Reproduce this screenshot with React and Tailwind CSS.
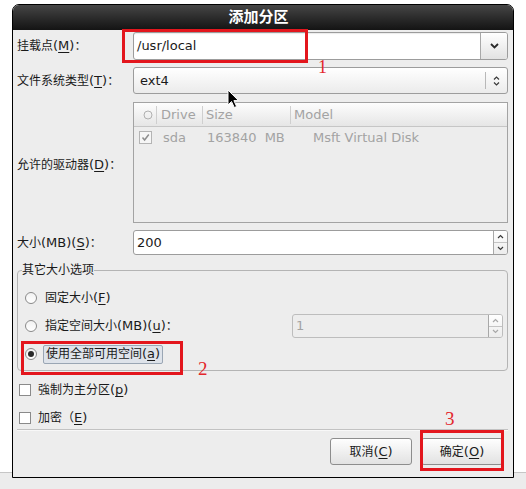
import React from "react";

const CJK_RE = /([\u2E80-\u9FFF\uFF00-\uFFEF\u3000-\u303F]+)/;

function Mixed({ text }) {
  return text.split(CJK_RE).map((p, i) =>
    i % 2 === 1 ? (
      <span key={i} className="text-[12px]">{p}</span>
    ) : (
      <React.Fragment key={i}>{p}</React.Fragment>
    )
  );
}

function Lbl({ a, k, b }) {
  return (
    <span className="whitespace-nowrap">
      <Mixed text={a} />
      <u className="underline-offset-2">{k}</u>
      <Mixed text={b} />
    </span>
  );
}

function ChevDown({ className = "" }) {
  return (
    <svg width="9" height="6" viewBox="0 0 9 6" className={className}>
      <path d="M1 1 L4.5 4.5 L8 1" fill="none" stroke="#2a2a2a" strokeWidth="1.8" />
    </svg>
  );
}

function UpDown() {
  return (
    <svg width="7" height="12" viewBox="0 0 7 12">
      <path d="M1 4.5 L3.5 2 L6 4.5" fill="none" stroke="#3a3a3a" strokeWidth="1.2" />
      <path d="M1 7.5 L3.5 10 L6 7.5" fill="none" stroke="#3a3a3a" strokeWidth="1.2" />
    </svg>
  );
}

function Stepper({ dim }) {
  const c = dim ? "#a8a8a8" : "#3a3a3a";
  return (
    <div className="w-[14px] h-full border-l border-[#a8a8a8] flex flex-col bg-linear-to-b from-white to-[#ececec]">
      <div className="flex-1 flex items-center justify-center border-b border-[#c4c4c4]">
        <svg width="7" height="5" viewBox="0 0 7 5">
          <path d="M1 4 L3.5 1.5 L6 4" fill="none" stroke={c} strokeWidth="1.2" />
        </svg>
      </div>
      <div className="flex-1 flex items-center justify-center">
        <svg width="7" height="5" viewBox="0 0 7 5">
          <path d="M1 1 L3.5 3.5 L6 1" fill="none" stroke={c} strokeWidth="1.2" />
        </svg>
      </div>
    </div>
  );
}

function Radio({ checked }) {
  return (
    <div className="w-[12px] h-[12px] rounded-full border border-[#8a8a8a] bg-linear-to-b from-[#f2f2f2] to-white flex items-center justify-center shrink-0">
      {checked && <div className="w-[6px] h-[6px] rounded-full bg-[#2a2a2a]" />}
    </div>
  );
}

function Check() {
  return <div className="w-[12px] h-[12px] border border-[#8a8a8a] bg-white shrink-0" />;
}

export default function App() {
  return (
    <div className="relative w-[526px] h-[489px] bg-white overflow-hidden text-[13px] text-[#1a1a1a] font-['DejaVu_Sans','Noto_Sans_CJK_SC',sans-serif]">
      {/* desktop strip */}
      <div className="absolute inset-x-0 top-[472px] bottom-0 bg-[#ececec] border-t border-[#c6c6c6]" />

      {/* dialog */}
      <div className="relative z-10 ml-[12px] mt-[4px] w-[502px] h-[474px] bg-[#ededed] border border-black rounded-t-[7px] overflow-hidden flex flex-col">
        <div className="h-[25px] shrink-0 bg-linear-to-b from-[#464646] to-[#141414] flex items-center justify-center pr-[9px] text-white font-bold text-[15px]">
          添加分区
        </div>

        <div className="flex flex-col pl-[4px] pr-[5px]">
          {/* mount point */}
          <div className="mt-[2px] h-[28px] flex items-center">
            <div className="w-[116px]">
              <Lbl a="挂载点(" k="M" b=")：" />
            </div>
            <div className="flex-1 h-full flex border border-[#9c9c9c] rounded-[3px] bg-white overflow-hidden shadow-[inset_0_1px_1px_rgba(0,0,0,0.08)]">
              <div className="flex-1 flex items-center pl-[3px]">/usr/local</div>
              <div className="w-[27px] border-l border-[#a8a8a8] bg-linear-to-b from-white to-[#e2e2e2] flex items-center justify-center">
                <ChevDown />
              </div>
            </div>
          </div>

          {/* fs type */}
          <div className="mt-[7px] h-[27px] flex items-center">
            <div className="w-[116px]">
              <Lbl a="文件系统类型(" k="T" b=")：" />
            </div>
            <div className="flex-1 h-full flex items-center border border-[#9c9c9c] rounded-[3px] bg-linear-to-b from-white to-[#ebebeb]">
              <div className="flex-1 pl-[6px]">ext4</div>
              <div className="w-px h-[17px] bg-[#b8b8b8]" />
              <div className="w-[21px] flex items-center justify-center">
                <UpDown />
              </div>
            </div>
          </div>

          {/* drives */}
          <div className="mt-[8px] h-[121px] flex items-center">
            <div className="w-[116px] pt-[4px]">
              <Lbl a="允许的驱动器(" k="D" b=")：" />
            </div>
            <div className="flex-1 h-full border border-[#a3a3a3] bg-[#ededed] flex flex-col text-[#a3a3a3]">
              <div className="h-[24px] flex items-center bg-linear-to-b from-[#fdfdfd] to-[#e6e6e6] border-b border-[#c6c6c6]">
                <div className="w-[22px] flex items-center justify-center pl-[6px]">
                  <svg width="10" height="10" viewBox="0 0 10 10">
                    <circle cx="5" cy="5" r="4" fill="none" stroke="#b0b0b0" strokeWidth="1" />
                  </svg>
                </div>
                <div className="w-px h-[18px] bg-[#cfcfcf]" />
                <div className="w-[45px] pl-[4px]">Drive</div>
                <div className="w-px h-[18px] bg-[#cfcfcf]" />
                <div className="w-[87px] pl-[3px]">Size</div>
                <div className="w-px h-[18px] bg-[#cfcfcf]" />
                <div className="flex-1 pl-[3px]">Model</div>
              </div>
              <div className="h-[21px] flex items-center">
                <div className="w-[23px] pl-[5px] flex items-center">
                  <div className="w-[13px] h-[13px] border border-[#b4b4b4] bg-[#f6f6f6] flex items-center justify-center">
                    <svg width="9" height="9" viewBox="0 0 9 9">
                      <path d="M1.5 4.5 L3.6 7 L7.8 1.5" fill="none" stroke="#8e8e8e" strokeWidth="1.5" />
                    </svg>
                  </div>
                </div>
                <div className="w-[46px] pl-[6px]">sda</div>
                <div className="w-[88px] pl-[4px] whitespace-nowrap">
                  163840<span className="ml-[8px]">MB</span>
                </div>
                <div className="flex-1 pl-[22px] whitespace-nowrap">Msft Virtual Disk</div>
              </div>
            </div>
          </div>

          {/* size */}
          <div className="mt-[7px] h-[25px] flex items-center">
            <div className="w-[116px]">
              <Lbl a="大小(MB)(" k="S" b=")：" />
            </div>
            <div className="flex-1 h-full flex border border-[#9c9c9c] rounded-[3px] bg-white overflow-hidden">
              <div className="flex-1 flex items-center pl-[3px]">200</div>
              <Stepper />
            </div>
          </div>

          {/* frame */}
          <div className="relative mt-[15px] h-[101px] border border-[#b4b4b4] rounded-[4px] pt-[13px] pl-[7px] pr-[4px] flex flex-col">
            <div className="absolute -top-[8px] left-[4px] bg-[#ededed] leading-[14px]">
              <Mixed text="其它大小选项" />
            </div>
            <div className="h-[28px] flex items-center">
              <Radio />
              <div className="ml-[6px] px-[2px]">
                <Lbl a="固定大小(" k="F" b=")" />
              </div>
            </div>
            <div className="h-[28px] flex items-center">
              <Radio />
              <div className="ml-[6px] px-[2px]">
                <Lbl a="指定空间大小(MB)(" k="u" b=")：" />
              </div>
              <div className="flex-1" />
              <div className="w-[211px] h-[24px] flex border border-[#bdbdbd] rounded-[3px] bg-[#ededed] overflow-hidden text-[#a3a3a3]">
                <div className="flex-1 flex items-center pl-[3px]">1</div>
                <Stepper dim />
              </div>
            </div>
            <div className="h-[28px] flex items-center">
              <Radio checked />
              <div className="ml-[6px] h-[19px] px-[2px] flex items-center bg-[#dee3ea] border border-[#9aa6b4] rounded-[2px]">
                <Lbl a="使用全部可用空间(" k="a" b=")" />
              </div>
            </div>
          </div>

          {/* checkboxes */}
          <div className="mt-[9px] h-[20px] flex items-center pl-[2px]">
            <Check />
            <div className="ml-[7px]">
              <Lbl a="強制为主分区(" k="p" b=")" />
            </div>
          </div>
          <div className="mt-[8px] h-[20px] flex items-center pl-[2px]">
            <Check />
            <div className="ml-[7px]">
              <Lbl a="加密（" k="E" b=")" />
            </div>
          </div>

          <div className="mt-[1px] h-px bg-[#c2c2c2]" />
          <div className="h-px bg-[#f8f8f8]" />

          {/* buttons */}
          <div className="mt-[7px] h-[27px] flex justify-end gap-[9px] pr-[5px]">
            <div className="w-[82px] h-full border border-[#8d8d8d] rounded-[3px] bg-linear-to-b from-[#fefefe] to-[#e2e2e2] flex items-center justify-center">
              <Lbl a="取消(" k="C" b=")" />
            </div>
            <div className="w-[82px] h-full border border-[#8d8d8d] rounded-[3px] bg-linear-to-b from-[#fefefe] to-[#e2e2e2] flex items-center justify-center">
              <Lbl a="确定(" k="O" b=")" />
            </div>
          </div>
        </div>
      </div>

      {/* annotations */}
      <div className="absolute z-20 left-[122px] top-[29px] w-[186px] h-[34px] border-[3px] border-[#e3161d]" />
      <div className="absolute z-20 left-[21px] top-[341px] w-[162px] h-[34px] border-[3px] border-[#e3161d]" />
      <div className="absolute z-20 left-[420px] top-[430px] w-[84px] h-[41px] border-[3px] border-[#e3161d]" />
      <div className="absolute z-20 left-[318px] top-[58px] text-[18px] leading-none text-[#e3262b] font-['Liberation_Serif',serif]">1</div>
      <div className="absolute z-20 left-[198px] top-[359px] text-[19px] leading-none text-[#e3262b] font-['Liberation_Serif',serif]">2</div>
      <div className="absolute z-20 left-[445px] top-[409px] text-[19px] leading-none text-[#e3262b] font-['Liberation_Serif',serif]">3</div>

      {/* mouse cursor */}
      <svg className="absolute z-30 left-[227px] top-[89px]" width="13" height="20" viewBox="0 0 13 20">
        <path d="M1 1 L1 16 L4.5 12.5 L7.3 18.5 L9.6 17.5 L6.9 11.6 L11.5 11.6 Z" fill="#000" stroke="#fff" strokeWidth="1" strokeLinejoin="round" />
      </svg>
    </div>
  );
}
